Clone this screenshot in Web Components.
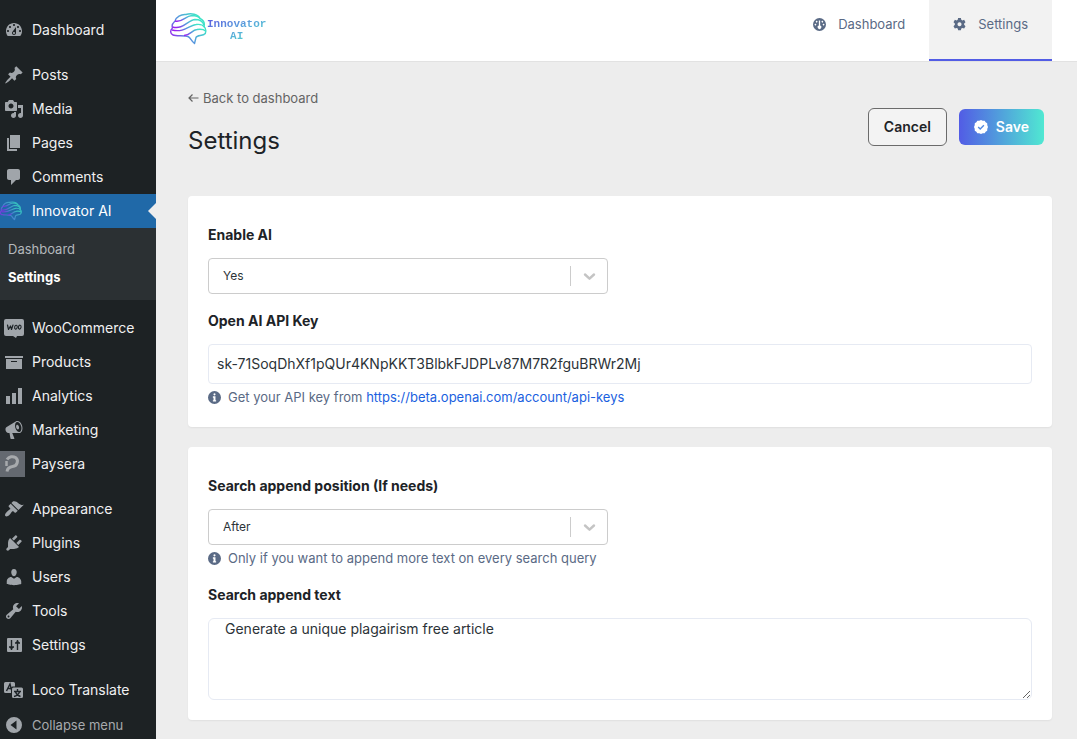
<!DOCTYPE html>
<html lang="en">
<head>
<meta charset="utf-8">
<meta name="viewport" content="width=device-width, initial-scale=1">
<title>Settings - Innovator AI</title>
<style>
  body {
    margin: 0;
    background: #ededed;
    color: #1d2327;
    font: 14px/20px Inter, "Liberation Sans", sans-serif;
  }
</style>
</head>
<body>
<admin-shell>
  <admin-menu slot="menu">
    <menu-item icon="dashboard">Dashboard</menu-item>
    <menu-item icon="post" separated>Posts</menu-item>
    <menu-item icon="media">Media</menu-item>
    <menu-item icon="page">Pages</menu-item>
    <menu-item icon="comment">Comments</menu-item>
    <menu-item icon="brain" current>Innovator AI</menu-item>
    <sub-menu>
      <a href="#dashboard">Dashboard</a>
      <a href="#settings" aria-current="page">Settings</a>
    </sub-menu>
    <menu-item icon="woo" separated>WooCommerce</menu-item>
    <menu-item icon="archive">Products</menu-item>
    <menu-item icon="chart">Analytics</menu-item>
    <menu-item icon="megaphone">Marketing</menu-item>
    <menu-item icon="paysera">Paysera</menu-item>
    <menu-item icon="appearance" separated>Appearance</menu-item>
    <menu-item icon="plugin">Plugins</menu-item>
    <menu-item icon="user">Users</menu-item>
    <menu-item icon="tool">Tools</menu-item>
    <menu-item icon="sliders">Settings</menu-item>
    <menu-item icon="translate" separated>Loco Translate</menu-item>
    <menu-item icon="collapse" muted>Collapse menu</menu-item>
  </admin-menu>

  <top-bar slot="top">
    <brand-logo></brand-logo>
    <top-tab slot="tabs" icon="gauge">Dashboard</top-tab>
    <top-tab slot="tabs" icon="gear" current>Settings</top-tab>
  </top-bar>

  <page-head>
    Settings
    <action-button slot="actions">Cancel</action-button>
    <action-button slot="actions" icon="check" primary>Save</action-button>
  </page-head>

  <settings-card>
    <select-field label="Enable AI" options="Yes,No"></select-field>
    <text-field label="Open AI API Key" value="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">
      <help-text slot="help">Get your API key from <a href="https://beta.openai.com/account/api-keys">https://beta.openai.com/account/api-keys</a></help-text>
    </text-field>
  </settings-card>

  <settings-card>
    <select-field label="Search append position (If needs)" options="After,Before">
      <help-text slot="help">Only if you want to append more text on every search query</help-text>
    </select-field>
    <area-field label="Search append text" value="Generate a unique plagairism free article"></area-field>
  </settings-card>
</admin-shell>

<script>
const brainStrokes = `
  <path d="M3 22C0 21 0 17 2.500 15C1 11 4 9 5 8C6 4 11 1 16 1.500C21 0 28 1 30 5.500C33 7 35 10 34 13.500C36.500 16 36.500 20 34 21.500C31 23 27 22 26 24.500L24.500 30.500C21 28 21 25 18 23.500C15 22 6 23.500 3 22Z"/>
  <path d="M5 8C12 10 15 3 22 2.500C26 2.500 29 4 30 5.500"/>
  <path d="M2.500 14C13 17 18 7 25 6.500C30 6.500 33 9 34 12"/>
  <path d="M2 17C14 20 20 12 26 11.500C30 11 33 12 34.500 14"/>
  <path d="M14 22.500C20 22.500 22 17 27 16.500C31 16 34 16.500 35.500 18"/>`

const brain = (id, width) => `<svg viewBox="0 0 37 32" fill="none" stroke="url(#${id})" stroke-width="${width}" stroke-linejoin="round">
  <defs><linearGradient id="${id}" x1="0" y1=".8" x2=".9" y2=".3"><stop offset="0" stop-color="#9b1ff0"/><stop offset=".4" stop-color="#5a8ae0"/><stop offset="1" stop-color="#3fe3c8"/></linearGradient></defs>
  ${brainStrokes}</svg>`

const glyph = (d, size = 20) => `<svg viewBox="0 0 ${size} ${size}" fill="currentColor" fill-rule="evenodd"><path d="${d}"/></svg>`

const icons = {
  dashboard: glyph('M3.76 16h12.48c1.1-1.37 1.76-3.11 1.76-5 0-4.42-3.58-8-8-8s-8 3.58-8 8c0 1.89.66 3.63 1.76 5zM10 4c.55 0 1 .45 1 1s-.45 1-1 1-1-.45-1-1 .45-1 1-1zM6 6c.55 0 1 .45 1 1s-.45 1-1 1-1-.45-1-1 .45-1 1-1zm8 0c.55 0 1 .45 1 1s-.45 1-1 1-1-.45-1-1 .45-1 1-1zm-5.37 5.55L12 7v6c0 1.1-.9 2-2 2s-2-.9-2-2c0-.57.24-1.08.63-1.45zM4 10c.55 0 1 .45 1 1s-.45 1-1 1-1-.45-1-1 .45-1 1-1zm12 0c.55 0 1 .45 1 1s-.45 1-1 1-1-.45-1-1 .45-1 1-1zm-5 3c0-.55-.45-1-1-1s-1 .45-1 1 .45 1 1 1 1-.45 1-1z'),
  post: glyph('M10.44 3.02l1.82-1.82 6.36 6.35-1.83 1.82c-1.05-.68-2.48-.57-3.41.36l-.75.75c-.92.93-1.04 2.35-.35 3.41l-1.83 1.82-2.41-2.41-2.8 2.79c-.42.42-3.38 2.71-3.8 2.29s1.86-3.39 2.28-3.81l2.79-2.79L4.1 9.36l1.83-1.82c1.05.69 2.48.57 3.4-.36l.75-.75c.93-.92 1.05-2.35.36-3.41z'),
  media: glyph('M13 11V4c0-.55-.45-1-1-1h-1.67L9 1H5L3.67 3H2c-.55 0-1 .45-1 1v7c0 .55.45 1 1 1h10c.55 0 1-.45 1-1zM7 4.5c1.38 0 2.5 1.12 2.5 2.5S8.38 9.5 7 9.5 4.5 8.38 4.5 7 5.62 4.5 7 4.5zM14 6h5v10.5c0 1.38-1.12 2.5-2.5 2.5S14 17.88 14 16.5s1.12-2.5 2.5-2.5c.17 0 .34.02.5.05V9h-3V6zm-4 8.05V13h2v3.5c0 1.38-1.12 2.5-2.5 2.5S7 17.88 7 16.5 8.12 14 9.5 14c.17 0 .34.02.5.05z'),
  page: glyph('M6 15V2h10v13H6zm-1 1h8v2H3V5h2v11z'),
  comment: glyph('M5 2h9c1.1 0 2 .9 2 2v7c0 1.1-.9 2-2 2h-2l-5 5v-5H5c-1.1 0-2-.9-2-2V4c0-1.1.9-2 2-2z'),
  brain: brain('menu-brain', 2),
  woo: `<svg viewBox="0 0 20 20" fill="currentColor"><path d="M2 1h16a2 2 0 0 1 2 2v13a2 2 0 0 1-2 2h-5l-1 2-3-2H2a2 2 0 0 1-2-2V3a2 2 0 0 1 2-2z"/><path d="M3.500 7l1 4.500L6.500 8l1 3.500L9 7" fill="none" stroke="#1d2327" stroke-width="1.200" stroke-linejoin="round" stroke-linecap="round"/><g fill="none" stroke="#1d2327" stroke-width="1.100"><ellipse cx="12" cy="9.200" rx="1.300" ry="2" transform="rotate(12 12 9)"/><ellipse cx="15.800" cy="9.200" rx="1.300" ry="2" transform="rotate(12 16 9)"/></g></svg>`,
  archive: glyph('M19 4v2H1V4h18zM2 7h16v10H2V7zm11 3V9H7v1h6z'),
  chart: glyph('M18 18V2h-4v16h4zm-6 0V7H8v11h4zm-6 0v-8H2v8h4z'),
  megaphone: glyph('M18.15 5.94c.46 1.62.38 3.22-.02 4.48-.42 1.28-1.26 2.18-2.3 2.48-.16.06-.26.06-.4.06-.06.02-.12.02-.18.02-.06.02-.14.02-.22.02h-6.8l2.22 5.5c.02.14-.06.26-.14.34-.08.1-.24.16-.34.16H6.95c-.1 0-.26-.06-.34-.16-.08-.08-.16-.2-.14-.34l-1-5.5H4.25l-.02-.02c-.5.06-1.08-.18-1.54-.62s-.88-1.08-1.06-1.88c-.24-.8-.2-1.56-.02-2.2.18-.62.58-1.08 1.06-1.3l.02-.02 9-5.4c.1-.06.18-.1.24-.16.06-.04.14-.08.24-.12.16-.08.28-.12.5-.18 1.04-.3 2.24.1 3.22.98s1.84 2.24 2.26 3.86zm-2.58 5.98h-.02c.4-.1.74-.34 1.04-.7.58-.7.86-1.76.86-3.04 0-.64-.1-1.3-.28-1.98-.34-1.36-1.02-2.5-1.78-3.24s-1.68-1.1-2.46-.88c-.82.22-1.4.96-1.7 2-.32 1.04-.28 2.36.06 3.72.38 1.36 1 2.5 1.8 3.24.78.74 1.62 1.1 2.48.88zm-2.54-7.08c.22-.04.42-.02.62.04.38.16.76.48 1.02 1s.42 1.2.42 1.78c0 .3-.04.56-.12.8-.18.48-.44.84-.86.94-.34.1-.8-.06-1.14-.4s-.64-.86-.78-1.5c-.18-.62-.12-1.24.02-1.72s.48-.84.82-.94z'),
  paysera: `<svg viewBox="0 0 25 26"><path fill="#646970" d="M0 0h25v26H0z"/><g fill="none" stroke="#a7aaad" stroke-width="3"><path d="M7 8.500C9 5.500 13 5 15.500 6.500C19 9 17.500 15 12.500 15.500C9 16 7.500 17 7 20.500"/><path d="M6.500 10v5" stroke-width="2.500"/></g></svg>`,
  appearance: glyph('M14.48 11.06L7.41 3.99l1.5-1.5c.5-.56 2.3-.47 3.51.32 1.21.8 1.43 1.28 2.91 2.1 1.18.64 2.45 1.26 4.45.85zm-.71.71L6.7 4.7 4.93 6.47c-.39.39-.39 1.02 0 1.41l1.06 1.06c.39.39.39 1.03 0 1.42-.6.6-1.43 1.11-2.21 1.69-.35.26-.7.53-1.01.84C1.43 14.23.4 16.08 1.4 17.07c.99 1 2.84-.03 4.18-1.36.31-.31.58-.66.85-1.02.57-.78 1.08-1.61 1.69-2.21.39-.39 1.02-.39 1.41 0l1.06 1.06c.39.39 1.02.39 1.41 0z'),
  plugin: glyph('M13.11 4.36L9.87 7.6 8 5.73l3.24-3.24c.35-.34 1.05-.2 1.56.32.52.51.66 1.21.31 1.55zm-8 1.77l.91-1.12 9.01 9.01-1.19.84c-.71.71-2.63 1.16-3.82 1.16H6.14L4.9 17.26c-.59.59-1.54.59-2.12 0-.59-.58-.59-1.53 0-2.12l1.24-1.24v-3.88c0-1.13.4-3.19 1.09-3.89zm7.26 3.97l3.24-3.24c.34-.35 1.04-.21 1.55.31.52.51.66 1.21.31 1.55l-3.24 3.25z'),
  user: glyph('M10 9.25c-2.27 0-2.73-3.44-2.73-3.44C7 4.02 7.82 2 9.97 2c2.16 0 2.98 2.02 2.71 3.81 0 0-.41 3.44-2.68 3.44zm0 2.57L12.72 10c2.39 0 4.52 2.33 4.52 4.53v2.49s-3.65 1.13-7.24 1.13c-3.65 0-7.24-1.13-7.24-1.13v-2.49c0-2.25 1.94-4.48 4.47-4.48z'),
  tool: glyph('M16.68 9.77c-1.34 1.34-3.3 1.67-4.95.99l-5.41 6.52c-.99.99-2.59.99-3.58 0s-.99-2.59 0-3.57l6.52-5.42c-.68-1.65-.35-3.61.99-4.95 1.28-1.28 3.12-1.62 4.72-1.06l-2.89 2.89 2.82 2.82 2.86-2.87c.53 1.58.18 3.39-1.08 4.65zM3.81 16.21c.4.39 1.04.39 1.43 0 .4-.4.4-1.04 0-1.43-.39-.4-1.03-.4-1.43 0-.39.39-.39 1.03 0 1.43z'),
  sliders: `<svg viewBox="0 0 20 20"><path fill="currentColor" d="M4 3h13a1 1 0 0 1 1 1v12a1 1 0 0 1-1 1H4a1 1 0 0 1-1-1V4a1 1 0 0 1 1-1z"/><path d="M7.500 5v10M5 12h5M13.500 5v10M11 8h5" fill="none" stroke="#1d2327" stroke-width="1.400"/><path d="M5.500 12h4l-2 3zM11.500 8h4l-2-3z" fill="#1d2327"/></svg>`,
  translate: `<svg viewBox="0 0 20 20"><path fill="currentColor" d="M1.500 2h8A1.500 1.500 0 0 1 11 3.500V6.500H8.500A1.500 1.500 0 0 0 7 8v5H1.500A1.500 1.500 0 0 1 0 11.500v-8A1.500 1.500 0 0 1 1.500 2zM9.500 7.500h8A1.500 1.500 0 0 1 19 9v7.500a1.500 1.500 0 0 1-1.500 1.500h-8A1.500 1.500 0 0 1 8 16.500V9a1.500 1.500 0 0 1 1.500-1.500z"/><path d="M2.500 11L6 4l1.500 6M4 8.500h3.500M13.500 9v2M10 11.500h7M11.500 12c1 2.500 3 4 5 4.500M15.500 12c-1 2.500-3 4-5.500 4.500" fill="none" stroke="#1d2327" stroke-width="1.400"/></svg>`,
  collapse: glyph('M10 2a8 8 0 1 0 0 16a8 8 0 1 0 0-16zM12.500 5.500v9L6.500 10z'),
  gauge: glyph('M8 0a8 8 0 1 0 0 16A8 8 0 1 0 8 0zM7.200 3h1.600v6.300a2.200 2.200 0 1 1-1.600 0zM4.500 3.500a1 1 0 1 0 .01 0zM11.500 3.500a1 1 0 1 0 .01 0zM3 7a1 1 0 1 0 .01 0zM13 7a1 1 0 1 0 .01 0z', 16),
  gear: glyph('M6.300 0h3.400l.5 2.200 1.300.8 2.200-.7 1.700 2.900-1.700 1.600v1.600l1.700 1.600-1.700 2.900-2.200-.7-1.300.8-.5 2.200H6.300l-.5-2.200-1.300-.8-2.200.7L.6 10l1.700-1.600V6.800L.6 5.200l1.700-2.900 2.200.7 1.300-.8zM8 5.200a2.500 2.500 0 1 0 .01 0z', 16),
  check: `<svg viewBox="0 0 16 16"><path fill="#fff" d="M8 0l2 .8 2.200.1 1.100 1.800 1.800 1.100.1 2.200.8 2-.8 2-.1 2.200-1.800 1.100-1.100 1.800-2.200.1-2 .8-2-.8-2.200-.1-1.100-1.800-1.800-1.100-.1-2.200L0 8l.8-2 .1-2.200 1.800-1.100L3.800.9 6 .8z"/><path d="M4.800 8l2.300 2.300 4.200-4.300" fill="none" stroke="#5289df" stroke-width="1.600"/></svg>`,
  info: glyph('M8 0a8 8 0 1 0 0 16A8 8 0 1 0 8 0zM8 2.800a1.300 1.300 0 1 1-.01 0zM6 6.500h3.200v4.800H10V13H6v-1.700h.8V8.200H6z', 16)
}

const base = `
<style>
  *, *::before, *::after { box-sizing: border-box; }
  :host { display: block; }
  :host([hidden]) { display: none; }
  svg { display: block; width: 100%; height: 100%; }
  a { color: inherit; text-decoration: none; }
</style>`

/**
 * Shared set up for every element: fills the open shadow root.
 */
class BaseElement extends HTMLElement {
  constructor () {
    super()
    const template = document.createElement('template')
    template.innerHTML = base + this.render()
    this.attachShadow({ mode: 'open' })
      .appendChild(template.content.cloneNode(true))
  }

  attr (name) {
    return this.getAttribute(name) || ''
  }

  icon () {
    return icons[this.attr('icon')] || ''
  }
}

customElements.define('admin-shell', class extends BaseElement {
  render () {
    return `
    <style>
      :host { display: grid; grid-template-columns: 156px minmax(0, 1fr); min-height: 100vh; }
      main { padding: 0 25px 18px 32px; }
    </style>
    <slot name="menu"></slot>
    <div>
      <slot name="top"></slot>
      <main><slot></slot></main>
    </div>`
  }
})

customElements.define('admin-menu', class extends BaseElement {
  render () {
    return `
    <style>
      :host { position: sticky; top: 0; height: 100vh; overflow: hidden; background: #1d2224; }
      nav { padding-top: 13px; }
    </style>
    <nav aria-label="Main menu"><slot></slot></nav>`
  }
})

customElements.define('menu-item', class extends BaseElement {
  render () {
    return `
    <style>
      :host([separated]) { margin-top: 11px; }
      a { display: flex; align-items: center; gap: 8px; height: 34px; padding-left: 4px; color: #f0f0f1; white-space: nowrap; }
      .icon { flex: none; width: 20px; height: 20px; color: #a0a5aa; }
      :host([icon="paysera"]) a { gap: 7px; padding-left: 0; }
      :host([icon="paysera"]) .icon { width: 25px; height: 26px; }
      :host([icon="brain"]) a { gap: 10px; padding-left: 0; }
      :host([icon="brain"]) .icon { width: 22px; opacity: .7; }
      :host([current]) a { background: #2069a8; color: #fff; }
      :host([current]) a::after { content: ""; margin-left: auto; border: 8px solid transparent; border-left: 0; border-right-color: #ededed; }
      :host([muted]) { margin-top: 1px; }
      :host([muted]) a { color: #a7aaad; font-size: 13px; }
    </style>
    <a href="#"><span class="icon">${this.icon()}</span><slot></slot></a>`
  }
})

customElements.define('sub-menu', class extends BaseElement {
  render () {
    return `
    <style>
      :host { padding: 7px 8px 9px; background: #2b3033; font-size: 13px; }
      ::slotted(a) { display: block; line-height: 28px; color: #b4b8bc; text-decoration: none; }
      ::slotted(a[aria-current]) { color: #fff; font-weight: 700; }
    </style>
    <slot></slot>`
  }
})

customElements.define('top-bar', class extends BaseElement {
  render () {
    return `
    <style>
      :host { display: flex; justify-content: space-between; height: 61px; padding: 0 25px 0 14px; background: #fff; border-bottom: 1px solid #e2e2e2; }
      nav { display: flex; height: 61px; }
    </style>
    <slot></slot>
    <nav aria-label="Plugin"><slot name="tabs"></slot></nav>`
  }
})

customElements.define('brand-logo', class extends BaseElement {
  render () {
    return `
    <style>
      a { display: flex; padding-top: 13px; }
      .mark { width: 37px; height: 32px; }
      .name { padding-top: 5px; font: bold 11px/12px "Liberation Mono", monospace; text-align: center; color: transparent; background: linear-gradient(155deg, #5b62df 15%, #5aa2dc 50%, #4fe0cc 85%); background-clip: text; -webkit-background-clip: text; }
    </style>
    <a href="#"><span class="mark">${brain('logo-brain', 1.4)}</span><span class="name">Innovator<br>AI</span></a>`
  }
})

customElements.define('top-tab', class extends BaseElement {
  render () {
    return `
    <style>
      a { display: flex; gap: 12px; height: 61px; padding: 14px 24px 0; font-size: 13px; color: #5a6a85; border-bottom: 2px solid transparent; }
      .icon { width: 13px; height: 13px; margin-top: 4px; }
      :host([current]) a { background: #f2f2f2; border-color: #525ce5; }
    </style>
    <a href="#"><span class="icon">${this.icon()}</span><slot></slot></a>`
  }
})

customElements.define('page-head', class extends BaseElement {
  render () {
    return `
    <style>
      :host { display: flex; align-items: center; justify-content: space-between; padding: 27px 8px 31px 0; }
      .back { display: flex; align-items: center; gap: 4px; font-size: 13px; line-height: 18px; color: #646464; }
      .back svg { width: 11px; height: 10px; }
      h1 { margin: 10px 0 0; font-size: 24px; line-height: 48px; font-weight: 400; }
      .actions { display: flex; align-items: center; gap: 12px; }
    </style>
    <div>
      <a class="back" href="#dashboard"><svg viewBox="0 0 11 10" fill="none" stroke="currentColor" stroke-width="1.200"><path d="M10.500 5H1M4.500 1.500L1 5l3.500 3.500"/></svg>Back to dashboard</a>
      <h1><slot></slot></h1>
    </div>
    <div class="actions"><slot name="actions"></slot></div>`
  }
})

customElements.define('action-button', class extends BaseElement {
  render () {
    return `
    <style>
      button { display: flex; align-items: center; gap: 8px; height: 38px; padding: 0 15px; border: 1px solid #6b6b6b; border-radius: 6px; background: #f3f3f3; color: #1d2327; font: inherit; font-weight: 600; }
      .icon { width: 14px; height: 14px; }
      .icon:empty { display: none; }
      :host([primary]) button { height: 36px; border: 0; background: linear-gradient(90deg, #525ce5, #50e8d2); color: #fff; }
    </style>
    <button type="button"><span class="icon">${this.icon()}</span><slot></slot></button>`
  }
})

customElements.define('settings-card', class extends BaseElement {
  render () {
    return `
    <style>
      :host { display: grid; gap: 16px; margin-bottom: 20px; padding: 28px 20px 20px; background: #fff; border-radius: 4px; box-shadow: 0 1px 2px rgba(0, 0, 0, .06); }
      :host(:last-of-type) { margin-bottom: 0; }
    </style>
    <slot></slot>`
  }
})

customElements.define('help-text', class extends BaseElement {
  render () {
    return `
    <style>
      :host { display: flex; align-items: center; gap: 7px; margin-top: 4px; font-size: 13px; line-height: 19px; color: #5a6a85; }
      .icon { flex: none; width: 13px; height: 13px; }
      ::slotted(a) { color: #1a5fe0; text-decoration: none; }
    </style>
    <span class="icon">${icons.info}</span><span><slot></slot></span>`
  }
})

const fieldStyle = `
<style>
  label { display: block; margin-bottom: 12px; line-height: 22px; font-weight: 700; }
  input, textarea, select { display: block; width: 100%; margin: 0; font: inherit; color: #2c3338; background: #fff; border: 1px solid #e6eaf3; border-radius: 4px; outline: 0; }
</style>`

customElements.define('select-field', class extends BaseElement {
  render () {
    const options = this.attr('options').split(',')
    return fieldStyle + `
    <style>
      .box { display: grid; align-items: center; max-width: 400px; }
      select, .arrow { grid-area: 1 / 1; }
      select { appearance: none; height: 36px; padding: 0 52px 0 14px; border-color: #ccc; font-size: 12px; }
      .arrow { justify-self: end; width: 38px; height: 20px; padding: 0 9px; border-left: 1px solid #ccc; pointer-events: none; color: #c4c4c4; }
      .arrow svg { width: 20px; height: 20px; }
    </style>
    <label for="control">${this.attr('label')}</label>
    <div class="box">
      <select id="control">${options.map(o => `<option>${o}</option>`).join('')}</select>
      <span class="arrow"><svg viewBox="0 0 20 20" fill="none" stroke="currentColor" stroke-width="2.400" stroke-linecap="round" stroke-linejoin="round"><path d="M5 8.500l4.500 4.200 4.500-4.200"/></svg></span>
    </div>
    <slot name="help"></slot>`
  }
})

customElements.define('text-field', class extends BaseElement {
  render () {
    return fieldStyle + `
    <style>
      input { height: 40px; padding: 0 8px 2px; }
    </style>
    <label for="control">${this.attr('label')}</label>
    <input id="control" type="text" value="${this.attr('value')}">
    <slot name="help"></slot>`
  }
})

customElements.define('area-field', class extends BaseElement {
  render () {
    return fieldStyle + `
    <style>
      textarea { height: 82px; padding: 0 16px; border-radius: 6px; resize: vertical; }
    </style>
    <label for="control">${this.attr('label')}</label>
    <textarea id="control">${this.attr('value')}</textarea>`
  }
})
</script>
</body>
</html>
